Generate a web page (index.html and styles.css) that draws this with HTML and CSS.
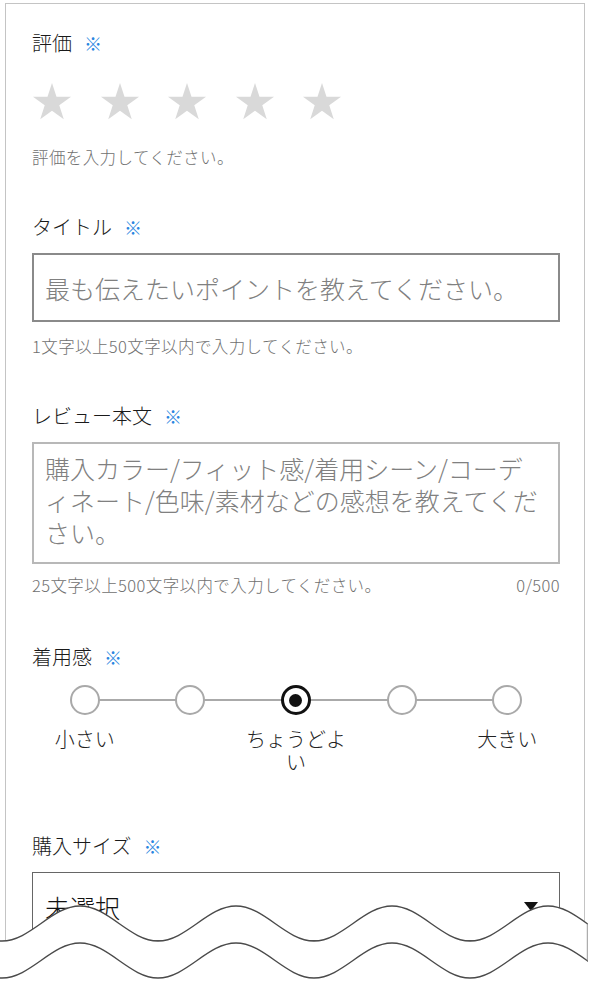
FILE: index.html
```html
<!DOCTYPE html>
<html lang="ja">
<head>
    <meta charset="UTF-8">
    <meta name="viewport" content="width=device-width, initial-scale=1.0">
    <title>レビューを書く</title>
    <link rel="stylesheet" href="styles.css">
</head>
<body>

<div class="review-form">
    <section class="field">
        <p class="field-label">評価<span class="req">※</span></p>
        <div class="stars">
            <svg viewBox="0 0 40 40"><polygon points="20,1 24.49,14.82 39.02,14.82 27.27,23.36 31.76,37.18 20,28.64 8.24,37.18 12.73,23.36 0.98,14.82 15.51,14.82"/></svg>
            <svg viewBox="0 0 40 40"><polygon points="20,1 24.49,14.82 39.02,14.82 27.27,23.36 31.76,37.18 20,28.64 8.24,37.18 12.73,23.36 0.98,14.82 15.51,14.82"/></svg>
            <svg viewBox="0 0 40 40"><polygon points="20,1 24.49,14.82 39.02,14.82 27.27,23.36 31.76,37.18 20,28.64 8.24,37.18 12.73,23.36 0.98,14.82 15.51,14.82"/></svg>
            <svg viewBox="0 0 40 40"><polygon points="20,1 24.49,14.82 39.02,14.82 27.27,23.36 31.76,37.18 20,28.64 8.24,37.18 12.73,23.36 0.98,14.82 15.51,14.82"/></svg>
            <svg viewBox="0 0 40 40"><polygon points="20,1 24.49,14.82 39.02,14.82 27.27,23.36 31.76,37.18 20,28.64 8.24,37.18 12.73,23.36 0.98,14.82 15.51,14.82"/></svg>
        </div>
        <p class="hint hint-stars">評価を入力してください。</p>
    </section>

    <section class="field">
        <p class="field-label">タイトル<span class="req">※</span></p>
        <div class="text-input">最も伝えたいポイントを教えてください。</div>
        <p class="hint">1文字以上50文字以内で入力してください。</p>
    </section>

    <section class="field">
        <p class="field-label">レビュー本文<span class="req">※</span></p>
        <div class="textarea">
            <span class="textarea-line">購入カラー/フィット感/着用シーン/コーデ</span>
            <span class="textarea-line">ィネート/色味/素材などの感想を教えてくだ</span>
            <span class="textarea-line">さい。</span>
        </div>
        <div class="hint hint-row">
            <span>25文字以上500文字以内で入力してください。</span>
            <span>0/500</span>
        </div>
    </section>

    <section class="field field-fit">
        <p class="field-label">着用感<span class="req">※</span></p>
        <div class="scale">
            <div class="scale-item"><span class="radio"></span><span class="scale-text">小さい</span></div>
            <div class="scale-item"><span class="radio"></span><span class="scale-text"></span></div>
            <div class="scale-item"><span class="radio is-checked"></span><span class="scale-text">ちょうどよい</span></div>
            <div class="scale-item"><span class="radio"></span><span class="scale-text"></span></div>
            <div class="scale-item"><span class="radio"></span><span class="scale-text">大きい</span></div>
        </div>
    </section>

    <section class="field field-size">
        <p class="field-label">購入サイズ<span class="req">※</span></p>
        <div class="select">
            <span>未選択</span>
            <span class="select-arrow"></span>
        </div>
    </section>
</div>

<!-- torn-off edge over the bottom of the form -->
<svg class="tear" viewBox="0 0 588 104" width="588" height="104">
    <path class="tear-fill" d="M-76 26 C-47.6 26 -26.4 61 2 61 S51.6 26 80 26 S129.6 61 158 61 S207.6 26 236 26 S285.6 61 314 61 S363.6 26 392 26 S441.6 61 470 61 S519.6 26 548 26 S597.6 61 626 61 L626 104 L-76 104 Z"/>
    <path class="tear-line" d="M-76 26 C-47.6 26 -26.4 61 2 61 S51.6 26 80 26 S129.6 61 158 61 S207.6 26 236 26 S285.6 61 314 61 S363.6 26 392 26 S441.6 61 470 61 S519.6 26 548 26 S597.6 61 626 61"/>
    <path class="tear-line" d="M-76 63 C-47.6 63 -26.4 98 2 98 S51.6 63 80 63 S129.6 98 158 98 S207.6 63 236 63 S285.6 98 314 98 S363.6 63 392 63 S441.6 98 470 98 S519.6 63 548 63 S597.6 98 626 98"/>
    <path class="tear-edge" d="M587.3 43.5 L587.3 80.5"/>
</svg>

</body>
</html>
```

FILE: styles.css
```css
html, body {
    margin: 0;
    height: 100%;
    overflow: hidden;
    background-color: #fff;
}
body {
    font-family: "Noto Sans CJK JP", "Noto Sans", sans-serif;
    font-weight: 300;
    color: #222;
    position: relative;
}
.review-form {
    margin: 3px 0 0 5px;
    width: 580px;
    min-height: 1000px;
    box-sizing: border-box;
    border: 1px solid #c4c4c4;
    border-bottom: none;
    padding: 25px 24px 0 26px;
}
.field + .field {
    margin-top: 45px;
}
.field-label {
    margin: 0;
    font-size: 20px;
    line-height: 28px;
    color: #1a1a1a;
}
.req {
    color: #2a86e0;
    font-size: 18px;
    margin-left: 12px;
}
.stars {
    display: flex;
    gap: 27.5px;
    margin-top: 25px;
}
.stars svg {
    width: 40px;
    height: 40px;
    fill: #d9d9d9;
}
.hint {
    margin: 13px 0 0;
    font-size: 16.5px;
    letter-spacing: 0.4px;
    line-height: 22px;
    color: #707070;
}
.hint-stars {
    margin-top: 24px;
}
.hint-row {
    display: flex;
    justify-content: space-between;
    margin-top: 10px;
}
.text-input {
    margin-top: 12px;
    height: 69px;
    box-sizing: border-box;
    border: 2px solid #8a8a8a;
    padding: 0 11px;
    display: flex;
    align-items: center;
    font-size: 25px;
    color: #808080;
    white-space: nowrap;
}
.textarea {
    margin-top: 12px;
    height: 122px;
    box-sizing: border-box;
    border: 2px solid #b8b8b8;
    padding: 8px 11px;
    font-size: 25px;
    color: #808080;
    white-space: nowrap;
}
.textarea-line {
    display: block;
    height: 32px;
    line-height: 32px;
}
.field-fit {
    margin-top: 47px !important;
}
.scale {
    position: relative;
    display: grid;
    grid-template-columns: repeat(5, 1fr);
    margin-top: 14px;
}
.scale::before {
    content: "";
    position: absolute;
    left: 10%;
    right: 10%;
    top: 14px;
    height: 2px;
    background-color: #aaa;
}
.scale-item {
    position: relative;
    display: flex;
    flex-direction: column;
    align-items: center;
}
.radio {
    width: 30px;
    height: 30px;
    box-sizing: border-box;
    border: 2.5px solid #a9a9a9;
    border-radius: 50%;
    background-color: #fff;
}
.radio.is-checked {
    border: 3px solid #111;
    display: flex;
    align-items: center;
    justify-content: center;
}
.radio.is-checked::after {
    content: "";
    width: 13px;
    height: 13px;
    border-radius: 50%;
    background-color: #111;
}
.scale-text {
    margin-top: 12px;
    font-size: 20px;
    line-height: 23px;
    text-align: center;
}
.field-size {
    margin-top: 59px !important;
}
.select {
    margin-top: 12px;
    height: 69px;
    box-sizing: border-box;
    border: 1px solid #666;
    display: flex;
    align-items: center;
    justify-content: space-between;
    padding: 0 21px 0 12px;
    font-size: 25px;
    color: #111;
}
.select-arrow {
    width: 0;
    height: 0;
    border-left: 7.5px solid transparent;
    border-right: 7.5px solid transparent;
    border-top: 9px solid #111;
}
.tear {
    position: absolute;
    top: 880px;
    left: 0;
    display: block;
}
.tear-fill {
    fill: #fff;
}
.tear-line, .tear-edge {
    fill: none;
    stroke: #4a4a4a;
    stroke-width: 1.4;
}
.tear-edge {
    stroke: #999;
    stroke-width: 1;
}
```
